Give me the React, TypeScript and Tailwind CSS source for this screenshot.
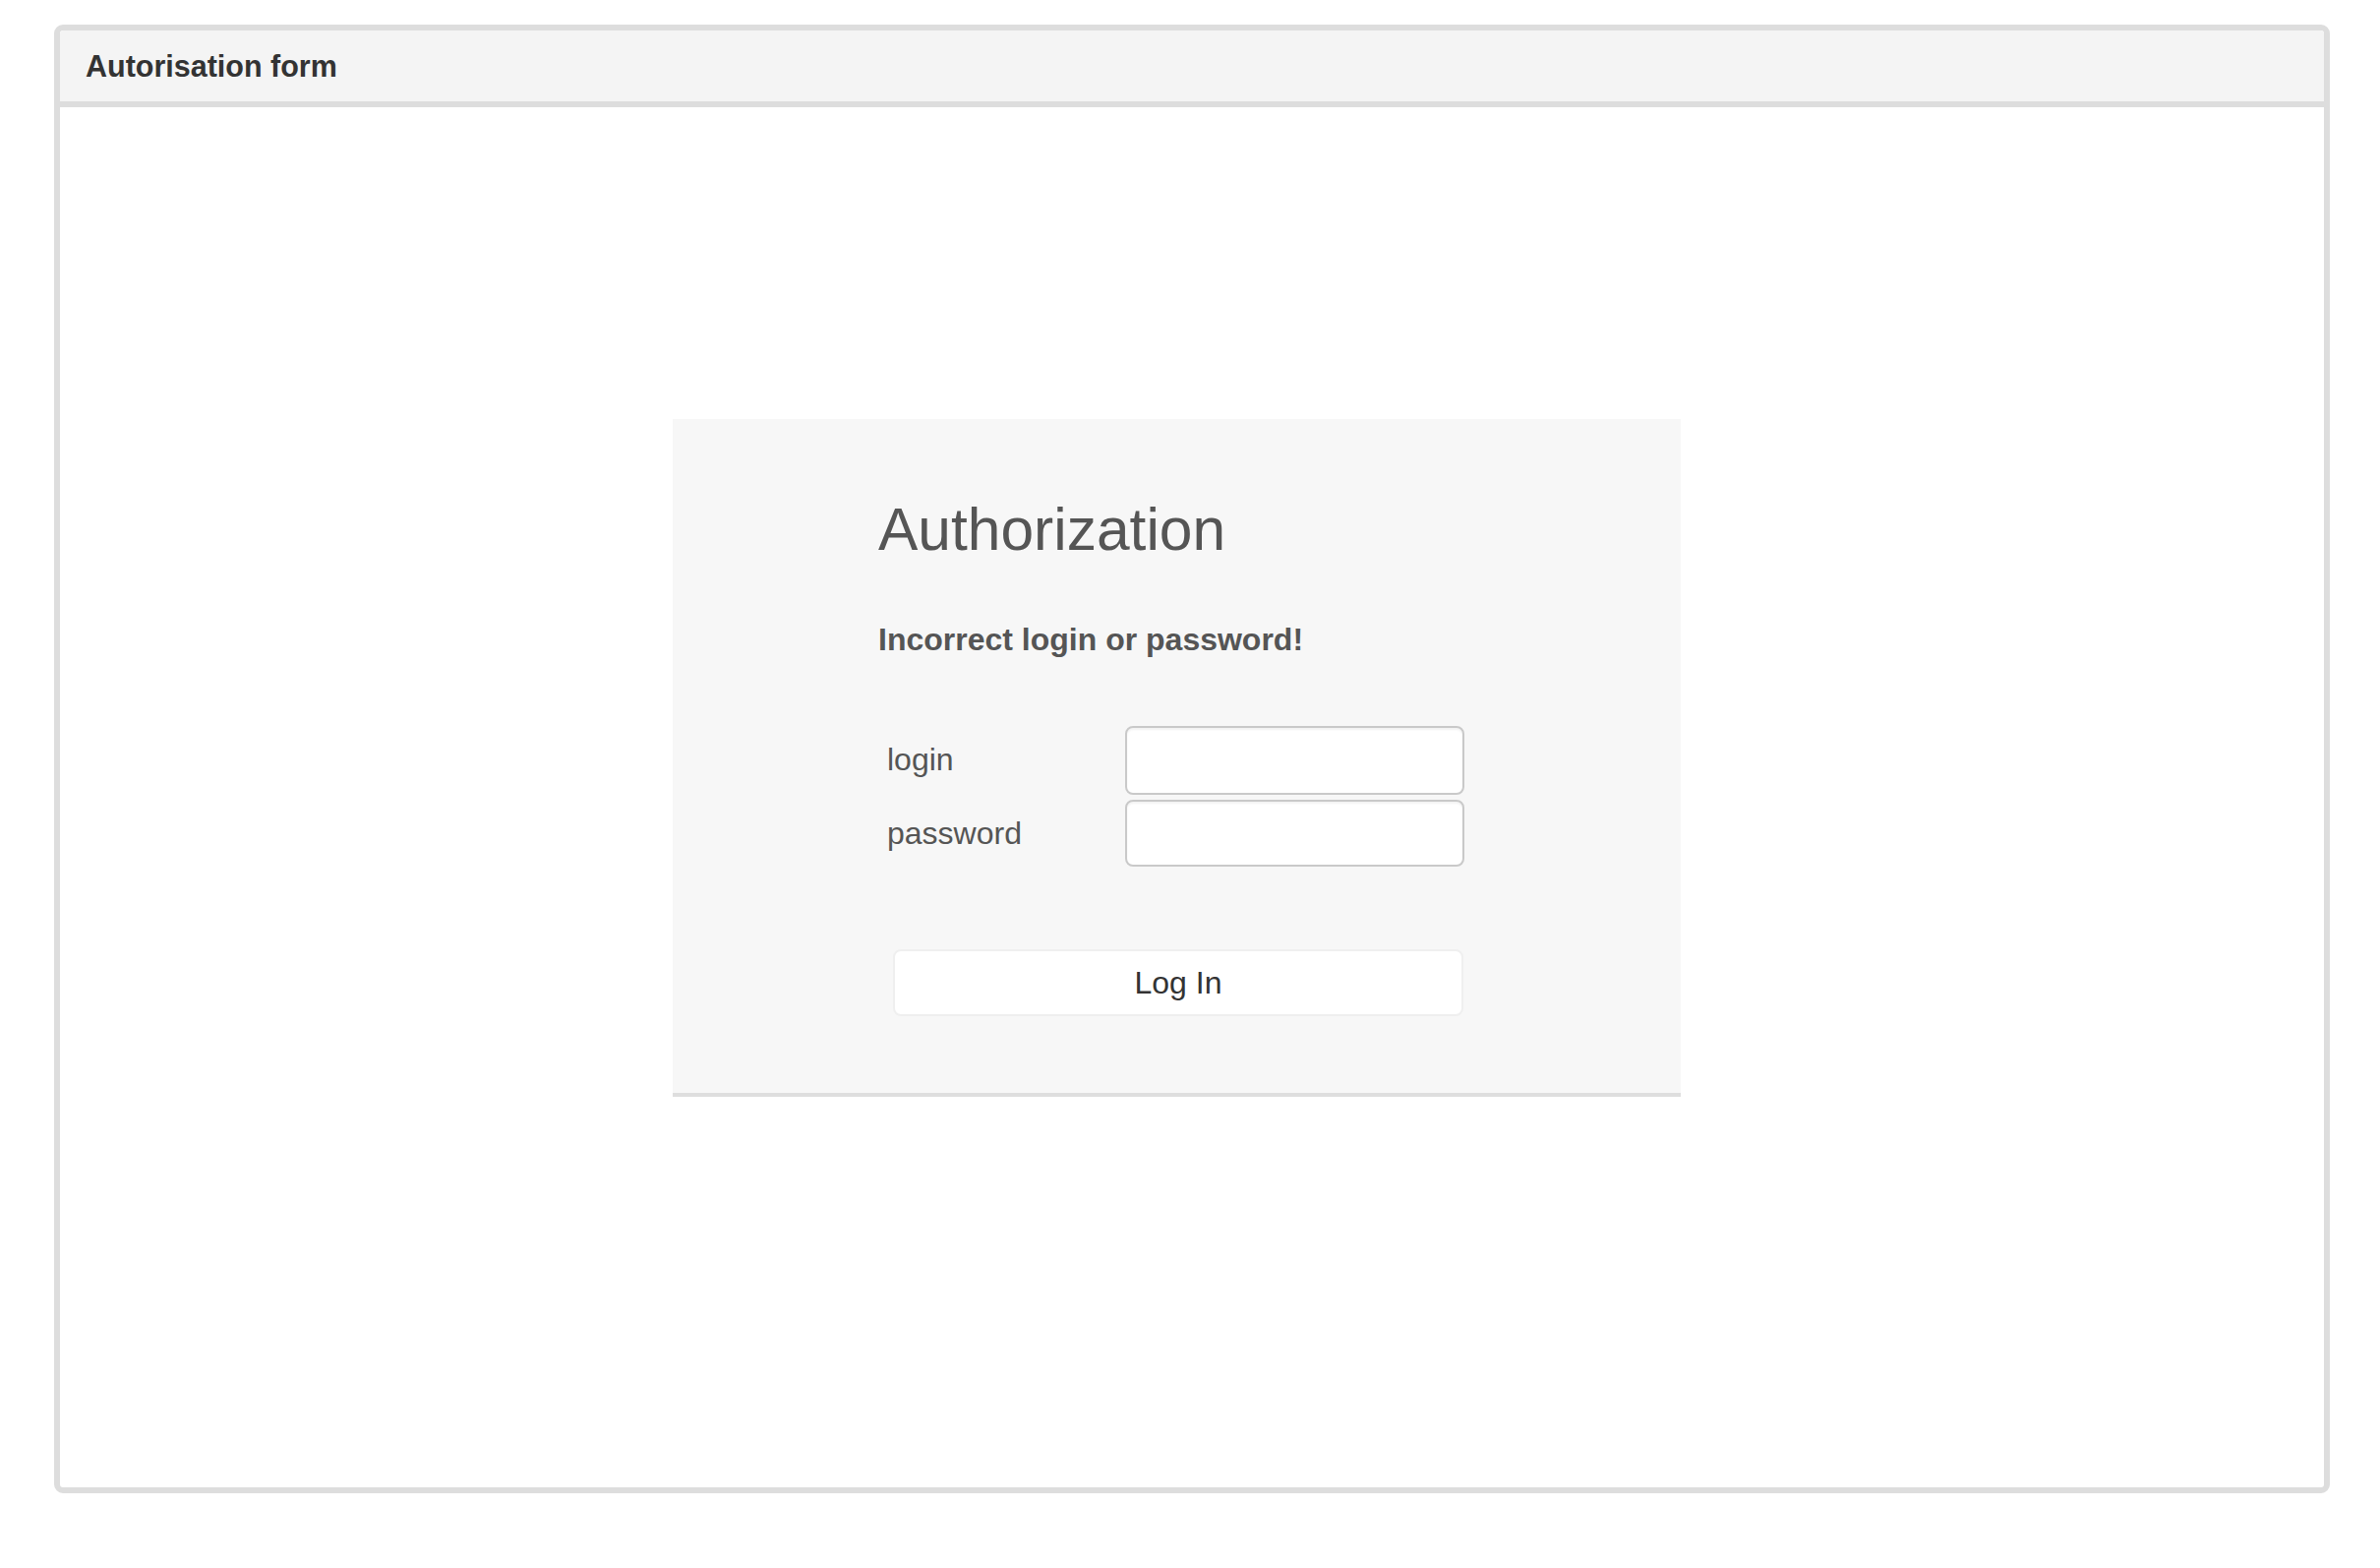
import { useState } from "react";

const font = { fontFamily: '"Liberation Sans", Arial, sans-serif' };

export default function App() {
  const [login, setLogin] = useState("");
  const [password, setPassword] = useState("");

  return (
    <div className="min-h-[1594px] w-[2420px] bg-white pt-[25px] pl-[55px]" style={font}>
      <div className="flex h-[1493px] w-[2314px] flex-col rounded-[9px] border-[6px] border-[#dddddd] bg-white">
        {/* panel header */}
        <div className="flex h-[78px] items-center rounded-t-[4px] border-b-[6px] border-[#dddddd] bg-[#f4f4f4] pl-[26px]">
          <span className="mt-[1px] text-[30.5px] font-bold leading-none text-[#333333]">
            Autorisation form
          </span>
        </div>

        {/* body */}
        <div className="flex-1 pt-[317px] pl-[623px]">
          <div className="w-[1025px] border-b-4 border-[#dedede] bg-[#f7f7f7] pt-[82px] pb-[78px] pl-[209px]">
            <h1 className="text-[60.5px] font-normal leading-none text-[#555555]">
              Authorization
            </h1>
            <p className="mt-[65px] text-[32px] font-bold leading-none text-[#555555]">
              Incorrect login or password!
            </p>

            <div className="mt-[72px] flex flex-col gap-[5px] pl-[9px]">
              <div className="flex h-[70px] items-center">
                <label className="w-[242px] pb-[2px] text-[32px] leading-none text-[#555555]">login</label>
                <input
                  value={login}
                  onChange={(e) => setLogin(e.target.value)}
                  className="h-[70px] w-[345px] rounded-[8px] border-2 border-[#c9c9c9] bg-white px-3 text-[28px] shadow-[inset_0_2px_2px_rgba(0,0,0,0.05)] outline-none"
                />
              </div>
              <div className="flex h-[68px] items-center">
                <label className="w-[242px] text-[32px] leading-none text-[#555555]">password</label>
                <input
                  type="password"
                  value={password}
                  onChange={(e) => setPassword(e.target.value)}
                  className="h-[68px] w-[345px] rounded-[8px] border-2 border-[#c9c9c9] bg-white px-3 text-[28px] shadow-[inset_0_2px_2px_rgba(0,0,0,0.05)] outline-none"
                />
              </div>
            </div>

            <button className="mt-[84px] ml-[15px] flex h-[68px] w-[580px] items-center justify-center rounded-[8px] border-2 border-[#efefef] bg-white text-[32px] leading-none text-[#333333]">
              Log In
            </button>
          </div>
        </div>
      </div>
    </div>
  );
}
